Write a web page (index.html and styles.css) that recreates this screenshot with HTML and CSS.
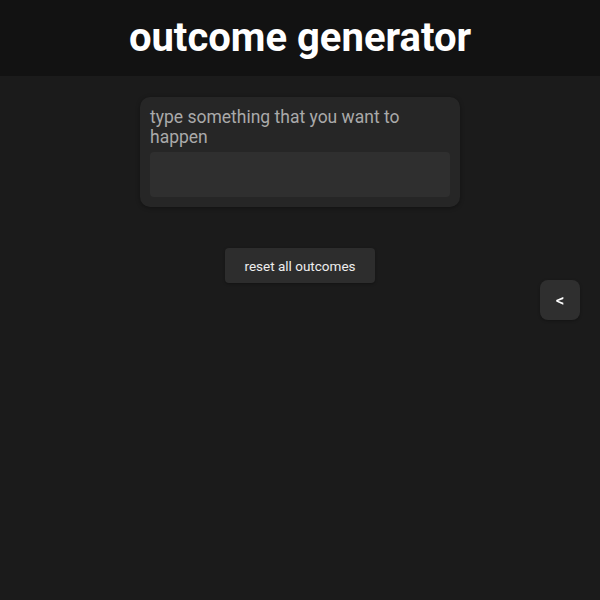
FILE: index.html
```html
<!DOCTYPE html>
<html>
<head>
<meta charset="utf-8">
<link rel="stylesheet" href="styles.css">
</head>
<body>
<header class="header">
  <h1 class="title">outcome generator</h1>
</header>
<main class="main">
  <div class="card">
    <label class="label" for="wish">type something that you want to happen</label>
    <textarea id="wish" class="input"></textarea>
  </div>
  <button class="reset">reset all outcomes</button>
</main>
<button class="toggle">&lt;</button>
</body>
</html>
```

FILE: styles.css
```css
html, body {
  margin: 0;
  padding: 0;
  background: #1b1b1b;
  font-family: Roboto, "Liberation Sans", sans-serif;
  min-height: 600px;
}
.header {
  background: #121212;
  height: 76px;
  display: flex;
  align-items: center;
  justify-content: center;
}
.title {
  margin: 0;
  color: #fff;
  font-size: 40px;
  font-weight: 700;
  line-height: 1;
  padding-bottom: 1px;
}
.main {
  display: flex;
  flex-direction: column;
  align-items: center;
  padding-top: 21px;
}
.card {
  width: 300px;
  padding: 10px;
  background: #262626;
  border-radius: 10px;
  box-shadow: 0 1px 4px rgba(0,0,0,0.35);
  display: flex;
  flex-direction: column;
}
.label {
  color: #aaaaaa;
  font-size: 17.5px;
  line-height: 20px;
  margin-bottom: 5px;
}
.input {
  height: 45px;
  box-sizing: border-box;
  background: #2f2f2f;
  border: none;
  border-radius: 4px;
  resize: none;
  outline: none;
  color: #ddd;
  font-family: inherit;
  margin: 0;
  display: block;
}
.reset {
  margin-top: 41px;
  width: 150px;
  height: 35px;
  background: #2d2d2d;
  border: none;
  border-radius: 4px;
  color: #eeeeee;
  font-family: inherit;
  font-size: 13.5px;
  box-shadow: 0 1px 3px rgba(0,0,0,0.3);
}
.toggle {
  position: fixed;
  top: 280px;
  right: 20px;
  width: 40px;
  height: 40px;
  background: #2f2f2f;
  border: none;
  border-radius: 8px;
  color: #fff;
  font-family: inherit;
  font-size: 17px;
  font-weight: 500;
  box-shadow: 0 1px 3px rgba(0,0,0,0.3);
}
```
